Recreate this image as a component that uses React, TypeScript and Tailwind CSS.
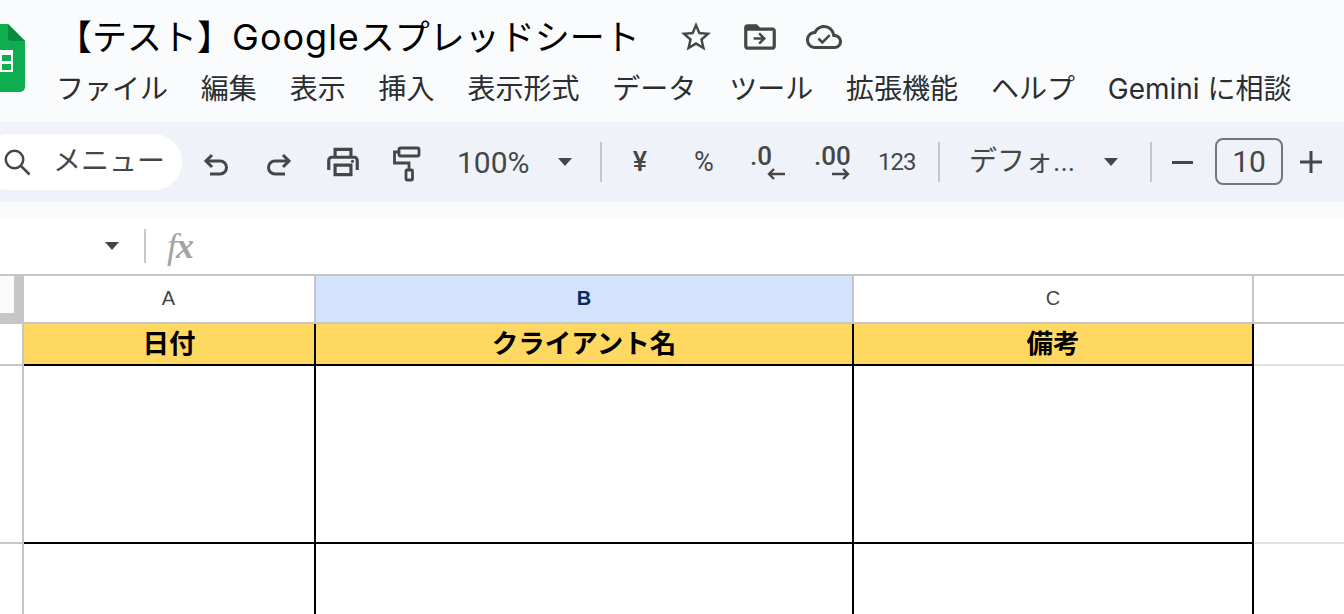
import React from "react";

const jp = "font-['Roboto','Noto_Sans_CJK_JP',sans-serif]";
const inter = "font-['Inter','Noto_Sans_CJK_JP',sans-serif]";

const menus = ["ファイル", "編集", "表示", "挿入", "表示形式", "データ", "ツール", "拡張機能", "ヘルプ", "Gemini に相談"];

const Caret = ({ className = "" }: { className?: string }) => (
  <svg width="18" height="10" viewBox="0 0 18 10" className={className}>
    <polygon points="2,1 16,1 9,9" fill="#444746" />
  </svg>
);

const Sep = () => <div className="w-[2px] h-[40px] bg-[#c7c7c7] shrink-0" />;

const SheetsLogo = () => (
  <svg width="50" height="68" viewBox="0 0 50 68" className="ml-[-25px] mt-[24px] shrink-0">
    <path d="M4 0H33L50 17V63a5 5 0 0 1-5 5H5a5 5 0 0 1-5-5V4a4 4 0 0 1 4-4z" fill="#0ead4f" />
    <path d="M33 0L50 17H37a4 4 0 0 1-4-4z" fill="#0a8a3e" />
    <path d="M14 26H38V48H14zM27 31H36V37H27zM27 40H36V46H27z" fill="#fff" fillRule="evenodd" />
  </svg>
);

const Cell = ({ w, children, cls }: { w: string; children?: React.ReactNode; cls: string }) => (
  <div className={`${w} ${cls} h-full shrink-0 flex items-center justify-center`}>{children}</div>
);

export default function App() {
  return (
    <div className={`w-[1344px] h-[614px] overflow-hidden bg-white flex flex-col ${jp}`}>
      {/* title + menu */}
      <div className="h-[122px] bg-[#f9fbfd] flex shrink-0">
        <SheetsLogo />
        <div className="pl-[33px] flex flex-col">
          <div className="flex items-center h-[38px] mt-[18px]">
            <span className={`text-[35px] leading-none text-black whitespace-nowrap ml-[-1px] ${inter}`}>
              【テスト】<span className="text-[36px] tracking-[1px]">Google</span>スプレッドシート
            </span>
            <div className="flex items-center ml-[38px] gap-[27px]">
              <svg width="36" height="36" viewBox="0 0 24 24" fill="#444746">
                <path d="M22 9.24l-7.19-.62L12 2 9.19 8.63 2 9.24l5.46 4.73L5.82 21 12 17.27 18.18 21l-1.63-7.03L22 9.24zM12 15.4l-3.76 2.27 1-4.28-3.32-2.88 4.38-.38L12 6.1l1.71 4.04 4.38.38-3.32 2.88 1 4.28L12 15.4z" />
              </svg>
              <svg width="38" height="38" viewBox="0 0 24 24" fill="#444746">
                <path d="M20 6h-8l-2-2H4c-1.1 0-2 .9-2 2v12c0 1.1.9 2 2 2h16c1.1 0 2-.9 2-2V8c0-1.1-.9-2-2-2zm0 12H4V8h16v10zm-8-1.2l3.8-3.8L12 9.2l-1.1 1.1 1.9 1.9H8v1.6h4.8l-1.9 1.9L12 16.8z" />
              </svg>
              <svg width="36" height="36" viewBox="0 0 24 24" fill="#444746">
                <path d="M19.35 10.04C18.67 6.59 15.64 4 12 4 9.11 4 6.6 5.64 5.35 8.04 2.34 8.36 0 10.91 0 14c0 3.31 2.69 6 6 6h13c2.76 0 5-2.24 5-5 0-2.64-2.05-4.78-4.65-4.96zM19 18H6c-2.21 0-4-1.79-4-4 0-2.05 1.53-3.76 3.56-3.97l1.07-.11.5-.95C8.08 7.14 9.94 6 12 6c2.62 0 4.88 1.86 5.39 4.43l.3 1.5 1.53.11c1.56.1 2.78 1.41 2.78 2.96 0 1.65-1.35 3-3 3z" />
                <path d="M8.3 13l2.6 2.6 4.9-4.9" fill="none" stroke="#444746" strokeWidth="1.7" />
              </svg>
            </div>
          </div>
          <div className="flex items-center gap-[32.85px] mt-[15px] ml-[-2px]">
            {menus.map((m) => (
              <span key={m} className={`text-[28px] leading-[36px] text-[#2b2d30] whitespace-nowrap ${inter}`}>{m}</span>
            ))}
          </div>
        </div>
      </div>

      {/* toolbar */}
      <div className="h-[80px] bg-[#f0f2fa] flex items-center shrink-0 text-[#444746]">
        <div className="w-[202px] ml-[-20px] h-[56px] bg-white rounded-full flex items-center pl-[22px] shrink-0">
          <svg width="30" height="30" viewBox="0 0 24 24" fill="none" stroke="#444746" strokeWidth="2">
            <circle cx="10" cy="10" r="7" />
            <path d="M15 15l7 7" />
          </svg>
          <span className="ml-[21px] text-[28px] whitespace-nowrap">メニュー</span>
        </div>
        <div className="w-[68px] flex justify-center mt-[6px] shrink-0">
          <svg width="28" height="28" viewBox="0 0 28 28" fill="none" stroke="#444746" strokeWidth="3">
            <path d="M10 4L4 10l6 6" />
            <path d="M4 10h14a6.5 6.5 0 0 1 0 13H8" />
          </svg>
        </div>
        <div className="w-[58px] flex justify-center mt-[6px] shrink-0">
          <svg width="28" height="28" viewBox="0 0 28 28" fill="none" stroke="#444746" strokeWidth="3">
            <path d="M18 4l6 6-6 6" />
            <path d="M24 10H10a6.5 6.5 0 0 0 0 13h10" />
          </svg>
        </div>
        <div className="w-[70px] flex justify-center shrink-0">
          <svg width="38" height="38" viewBox="0 0 24 24" fill="#444746">
            <path d="M19 8h-1V3H6v5H5c-1.66 0-3 1.34-3 3v6h4v4h12v-4h4v-6c0-1.66-1.34-3-3-3zM8 5h8v3H8V5zm8 14H8v-4h8v4zm2-2v-4H6v4H4v-6c0-.55.45-1 1-1h14c.55 0 1 .45 1 1v6h-2z" />
            <circle cx="18" cy="11.5" r="1" />
          </svg>
        </div>
        <div className="w-[58px] flex justify-center mt-[4px] shrink-0">
          <svg width="28" height="36" viewBox="0 0 28 36" fill="none" stroke="#444746" strokeWidth="2.8">
            <rect x="6" y="2" width="20" height="8" rx="1.5" />
            <path d="M6 6H1.5v11H16v7" />
            <rect x="13" y="24" width="6.5" height="10" rx="1" />
          </svg>
        </div>
        <span className="ml-[21px] w-[86px] text-[30px] shrink-0">100%</span>
        <Caret className="ml-[13px] shrink-0" />
        <div className="ml-[26px]"><Sep /></div>
        <div className="w-[76px] text-center text-[27px] font-medium shrink-0">¥</div>
        <div className="w-[52px] text-center text-[27px] shrink-0">%</div>
        <div className="w-[65px] ml-[18px] pl-[2px] flex flex-col items-start shrink-0 leading-none">
          <span className="text-[26px] font-medium leading-[24px]">.0</span>
          <svg width="18" height="12" viewBox="0 0 18 12" className="ml-[17px]" fill="none" stroke="#444746" strokeWidth="2.4">
            <path d="M18 6H2M7 1L2 6l5 5" />
          </svg>
        </div>
        <div className="w-[65px] pl-[1px] flex flex-col items-start shrink-0 leading-none">
          <span className="text-[26px] font-medium leading-[24px]">.00</span>
          <svg width="18" height="12" viewBox="0 0 18 12" className="ml-[18px]" fill="none" stroke="#444746" strokeWidth="2.4">
            <path d="M0 6h16M11 1l5 5-5 5" />
          </svg>
        </div>
        <div className="w-[38px] text-[24px] tracking-[-1px] shrink-0">123</div>
        <div className="ml-[22px]"><Sep /></div>
        <span className="ml-[29px] w-[105px] text-[28px] whitespace-nowrap shrink-0">デフォ...</span>
        <Caret className="ml-[28px] shrink-0" />
        <div className="ml-[30px]"><Sep /></div>
        <div className="w-[21px] h-[3px] bg-[#444746] ml-[20px] shrink-0" />
        <div className="ml-[22px] w-[68px] h-[47px] border-2 border-[#747775] rounded-[8px] flex items-center justify-center text-[30px] shrink-0 mt-[-2px]">10</div>
        <svg width="22" height="22" viewBox="0 0 22 22" className="ml-[17px] shrink-0" fill="none" stroke="#444746" strokeWidth="3">
          <path d="M11 0v22M0 11h22" />
        </svg>
      </div>

      <div className="h-[16px] bg-[#f9fbfd] shrink-0" />

      {/* formula bar */}
      <div className="h-[56px] bg-white flex items-center shrink-0">
        <Caret className="ml-[103px] shrink-0" />
        <div className="w-[2px] h-[34px] bg-[#c7c7c7] ml-[23px] shrink-0" />
        <span className="ml-[21px] font-['Liberation_Serif',serif] italic text-[36px] leading-none text-[#a3a3a3] tracking-[-1px]">
          f<span className="font-bold">x</span>
        </span>
      </div>

      {/* column headers */}
      <div className="h-[50px] flex shrink-0 border-y-2 border-[#c4c7c5] text-[20px] font-['Liberation_Sans',sans-serif] text-[#444746]">
        <div className="w-[22px] h-full shrink-0 bg-[#f9fbfd] border-r-[8px] border-b-[9px] border-[#c7c7c7]" />
        <Cell w="w-[294px]" cls="border-x-2 border-r-[#c4c7c5] border-l-[#c4c7c5] pr-[1px] pb-[2px]">A</Cell>
        <Cell w="w-[538px]" cls="border-r-2 border-[#c4c7c5] bg-[#d3e3fd] font-bold text-[#0b2a5c] pb-[2px]">B</Cell>
        <Cell w="w-[400px]" cls="border-r-2 border-[#c4c7c5] pb-[2px]">C</Cell>
      </div>

      {/* header row */}
      <div className="h-[42px] flex shrink-0">
        <div className="w-[22px] h-full shrink-0 border-b-2 border-[#c4c7c5]" />
        <div className="w-[2px] h-full shrink-0 bg-[#c4c7c5]" />
        <div className="w-[1230px] shrink-0 h-full flex border-b-2 border-black bg-[#ffd862] text-[26.5px] font-bold text-black">
          <Cell w="w-[292px]" cls="border-r-2 border-black">日付</Cell>
          <Cell w="w-[538px]" cls="border-r-2 border-black">クライアント名</Cell>
          <Cell w="w-[400px]" cls="border-r-2 border-black">備考</Cell>
        </div>
        <div className="flex-1 h-full border-b-2 border-[#e1e3e1]" />
      </div>

      {/* body rows */}
      <div className="h-[178px] flex shrink-0">
        <div className="w-[22px] h-full shrink-0 border-b-2 border-[#c4c7c5]" />
        <div className="w-[2px] h-full shrink-0 bg-[#c4c7c5]" />
        <div className="w-[1230px] shrink-0 h-full flex border-b-2 border-black">
          <Cell w="w-[292px]" cls="border-r-2 border-black" />
          <Cell w="w-[538px]" cls="border-r-2 border-black" />
          <Cell w="w-[400px]" cls="border-r-2 border-black" />
        </div>
        <div className="flex-1 h-full border-b-2 border-[#e1e3e1]" />
      </div>
      <div className="flex-1 flex min-h-0">
        <div className="w-[22px] h-full shrink-0" />
        <div className="w-[2px] h-full shrink-0 bg-[#c4c7c5]" />
        <Cell w="w-[292px]" cls="border-r-2 border-black" />
        <Cell w="w-[538px]" cls="border-r-2 border-black" />
        <Cell w="w-[400px]" cls="border-r-2 border-black" />
      </div>
    </div>
  );
}
